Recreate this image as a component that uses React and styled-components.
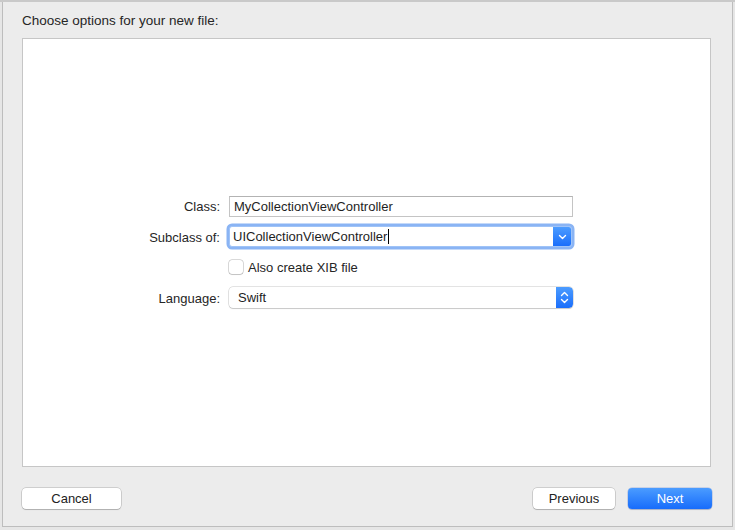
import React from 'react';
import styled, { createGlobalStyle } from 'styled-components';

const GlobalStyle = createGlobalStyle`
    html, body {
        margin: 0;
        padding: 0;
        background: #dfe4ea;
        font-family: 'Liberation Sans', Arial, sans-serif;
        -webkit-font-smoothing: antialiased;
    }
`;

const Page = styled.div`
    width: 735px;
    height: 530px;
    overflow: hidden;
    background: #e6e6e6;
    border-top: 2px solid #c9c9c9;
    box-sizing: border-box;
`;

const Sheet = styled.div`
    margin-left: 2px;
    width: 731px;
    height: 525px;
    box-sizing: border-box;
    background: #ececec;
    border: 1px solid #bdbdbd;
    border-top: none;
    display: flex;
    flex-direction: column;
    padding: 0 20px 0 19px;
`;

const Heading = styled.div`
    height: 36px;
    display: flex;
    align-items: center;
    padding-top: 1px;
    box-sizing: border-box;
    font-size: 13.5px;
    color: #262626;
`;

const ContentBox = styled.div`
    height: 429px;
    margin-right: 1px;
    box-sizing: border-box;
    background: #fff;
    border: 1px solid #c6c6c6;
    display: flex;
    align-items: center;
`;

const Form = styled.div`
    display: grid;
    grid-template-columns: 197px 344px;
    grid-auto-rows: 22px;
    column-gap: 9px;
    row-gap: 8px;
    align-items: center;
    font-size: 13px;
    color: #262626;
    margin-top: -3px;
`;

const Label = styled.div`
    text-align: right;
    padding-top: ${(p) => p.shift || 0}px;
`;

const Field = styled.div`
    height: 22px;
    display: flex;
    align-items: center;
`;

const TextField = styled.div`
    width: 344px;
    height: 21px;
    box-sizing: border-box;
    border: 1px solid #c4c4c4;
    border-top-color: #b3b3b3;
    background: #fff;
    display: flex;
    align-items: center;
    padding-left: 4px;
    color: #1e1e1e;
`;

const Combo = styled.div`
    width: 343px;
    height: 21px;
    margin-top: 1px;
    box-sizing: border-box;
    border: 1px solid #9fc3f7;
    border-radius: 3px;
    box-shadow: 0 0 0 2.5px #8ab4f4;
    background: #fff;
    display: flex;
    align-items: stretch;
`;

const ComboText = styled.div`
    flex: 1;
    display: flex;
    align-items: center;
    padding-left: 3px;
    color: #1e1e1e;
`;

const Caret = styled.span`
    display: inline-block;
    width: 1px;
    height: 15px;
    background: #000;
    margin-left: 1px;
`;

const BlueSegment = styled.div`
    width: ${(p) => p.w}px;
    background: linear-gradient(#4c9cff, #1a6efb);
    border-radius: 0 ${(p) => p.r}px ${(p) => p.r}px 0;
    display: flex;
    align-items: center;
    justify-content: center;
`;

const Popup = styled.div`
    width: 344px;
    height: 21px;
    margin-top: 3px;
    box-sizing: border-box;
    border-radius: 4px;
    background: #fff;
    box-shadow: 0 0 0 0.5px rgba(0, 0, 0, 0.22), 0 1px 1px rgba(0, 0, 0, 0.12);
    display: flex;
    align-items: stretch;
    overflow: hidden;
`;

const PopupText = styled.div`
    flex: 1;
    display: flex;
    align-items: center;
    padding-left: 9px;
    color: #1e1e1e;
`;

const CheckRow = styled.label`
    display: flex;
    align-items: center;
    gap: 5px;
    margin-top: 2px;
    color: #262626;
`;

const Checkbox = styled.span`
    width: 14px;
    height: 14px;
    box-sizing: border-box;
    border-radius: 3px;
    background: #fff;
    box-shadow: 0 0 0 0.5px rgba(0, 0, 0, 0.3), 0 1px 1px rgba(0, 0, 0, 0.1);
`;

const Footer = styled.div`
    flex: 1;
    display: flex;
    align-items: center;
    justify-content: space-between;
    padding-top: 4px;
`;

const ButtonGroup = styled.div`
    display: flex;
    gap: 13px;
`;

const Button = styled.button`
    width: ${(p) => p.w}px;
    height: 21px;
    border: none;
    border-radius: 4px;
    font-family: inherit;
    font-size: 13px;
    padding: 0;
    color: ${(p) => (p.primary ? '#fff' : '#222')};
    background: ${(p) => (p.primary ? 'linear-gradient(#4b9cff, #176cfb)' : '#fff')};
    box-shadow: ${(p) =>
        p.primary
            ? '0 0 0 0.5px rgba(0, 60, 200, 0.3), 0 1px 1px rgba(0, 0, 0, 0.15)'
            : '0 0 0 0.5px rgba(0, 0, 0, 0.25), 0 1px 1px rgba(0, 0, 0, 0.15)'};
`;

const ChevronDown = () => (
    <svg width="9" height="6" viewBox="0 0 9 6">
        <path d="M1.5 1.5 L4.5 4.5 L7.5 1.5" fill="none" stroke="#fff" strokeWidth="1.4" strokeLinecap="round" strokeLinejoin="round" />
    </svg>
);

const UpDown = () => (
    <svg width="9" height="13" viewBox="0 0 9 13">
        <path d="M1.5 4.5 L4.5 1.5 L7.5 4.5 M1.5 8.5 L4.5 11.5 L7.5 8.5" fill="none" stroke="#fff" strokeWidth="1.4" strokeLinecap="round" strokeLinejoin="round" />
    </svg>
);

export default function App() {
    return (
        <>
            <GlobalStyle />
            <Page>
                <Sheet>
                    <Heading>Choose options for your new file:</Heading>
                    <ContentBox>
                        <Form>
                            <Label>Class:</Label>
                            <Field>
                                <TextField>MyCollectionViewController</TextField>
                            </Field>

                            <Label shift={2}>Subclass of:</Label>
                            <Field>
                                <Combo>
                                    <ComboText>
                                        UICollectionViewController
                                        <Caret />
                                    </ComboText>
                                    <BlueSegment w={18} r={2}>
                                        <ChevronDown />
                                    </BlueSegment>
                                </Combo>
                            </Field>

                            <Label />
                            <Field>
                                <CheckRow>
                                    <Checkbox />
                                    Also create XIB file
                                </CheckRow>
                            </Field>

                            <Label shift={4}>Language:</Label>
                            <Field>
                                <Popup>
                                    <PopupText>Swift</PopupText>
                                    <BlueSegment w={17} r={4}>
                                        <UpDown />
                                    </BlueSegment>
                                </Popup>
                            </Field>
                        </Form>
                    </ContentBox>
                    <Footer>
                        <Button w={99}>Cancel</Button>
                        <ButtonGroup>
                            <Button w={82}>Previous</Button>
                            <Button w={84} primary>
                                Next
                            </Button>
                        </ButtonGroup>
                    </Footer>
                </Sheet>
            </Page>
        </>
    );
}
